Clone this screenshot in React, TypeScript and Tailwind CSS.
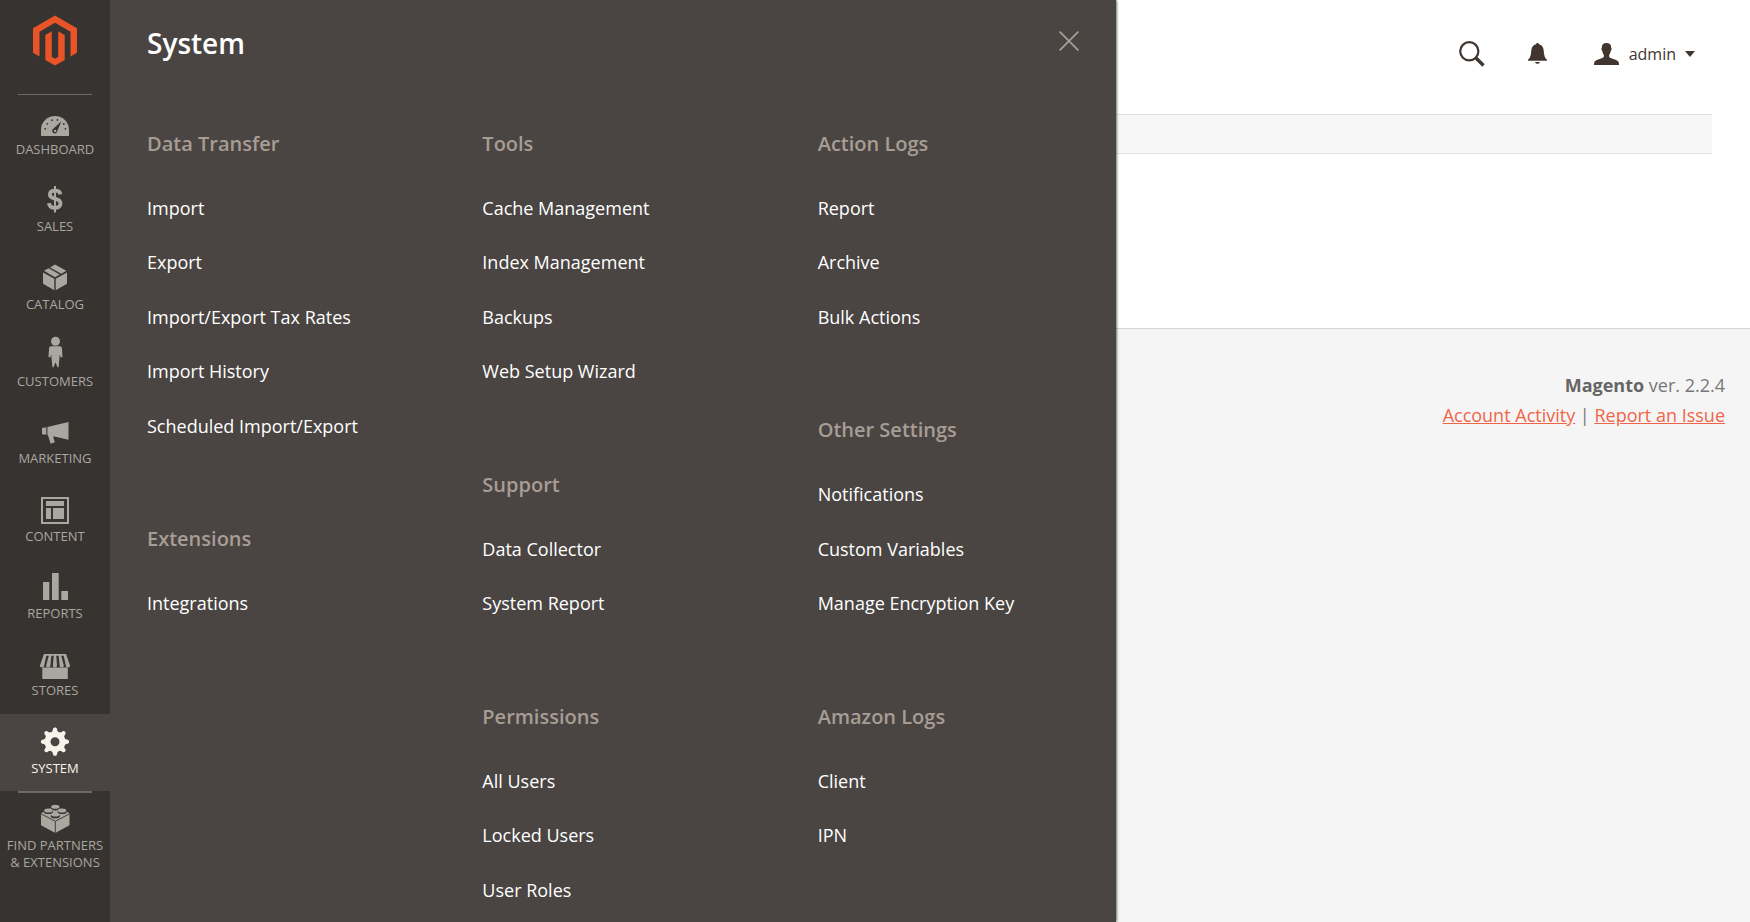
import type { ReactNode } from "react";

type NavItem = { label: ReactNode; icon: ReactNode; active?: boolean };
type Group = { title: string; links: string[] };

const navItems: NavItem[] = [
  {
    label: "Dashboard",
    icon: (
      <g transform="translate(4 13)">
        <path d="M0 20V14a14 14 0 0 1 28 0v6z" />
        <g className="fill-[#373330]">
          <circle cx="4.2" cy="12.8" r="0.9" />
          <circle cx="6.3" cy="7.8" r="0.9" />
          <circle cx="11" cy="4.2" r="0.9" />
          <circle cx="16.4" cy="3.9" r="0.9" />
          <circle cx="22.8" cy="8" r="0.9" />
          <circle cx="24.4" cy="12.8" r="0.9" />
          <path d="M20.400 5.200l-4 9.600a2.600 2.600 0 1 1-3.800-2.200z" />
        </g>
        <circle cx="14.200" cy="14.900" r="1.200" />
      </g>
    ),
  },
  {
    label: "Sales",
    icon: (
      <g transform="translate(10 6)" fill="none" stroke="currentColor">
        <path d="M13.400 8.400C13 5.800 11 4.600 8.100 4.600 5 4.600 2.900 6 2.900 8.500c0 5.800 10.600 2.600 10.600 9 0 2.800-2.300 4.400-5.500 4.400-3.400 0-5.700-1.600-6-4.800" strokeWidth="3.900" />
        <path d="M8 0v26.500" strokeWidth="2" />
      </g>
    ),
  },
  {
    label: "Catalog",
    icon: (
      <g transform="translate(6 6.500)">
        <path d="M12 0l11.300 6.200-5 3L7 2.900zM5.600 3.700l11.200 6.400L12 12.800.9 6.300zM0 7.900l11.300 6.400v11.400L0 19.300zM24 7.900l-11.300 6.400v11.400L24 19.300z" />
      </g>
    ),
  },
  {
    label: "Customers",
    icon: (
      <g transform="translate(11.500 1.700)">
        <circle cx="7" cy="4.500" r="4.500" />
        <path d="M2.600 9.600h8.800c1.200 0 1.900.8 2 2l.6 8.600-1.800.6-1-3-.3 4.200-.8 8.500H9L7 25.500l-2 5H3.900L3.100 22l-.3-4.200-1 3L0 20.200l.6-8.600c.1-1.200.8-2 2-2z" />
      </g>
    ),
  },
  {
    label: "Marketing",
    icon: (
      <g transform="translate(5 10)">
        <path d="M0 6l4.300-.8v7.600L0 12.200zM5.400 5L26.500 0v17.700L12.300 14.500l-1.200.3 1.800 5.500-4.300 1.400L6 13.300l-.6-.1z" />
      </g>
    ),
  },
  {
    label: "Content",
    icon: (
      <g transform="translate(4 7)">
        <path fillRule="evenodd" d="M0 0h28v27H0zM2 2v23h24V2zM5 4h18v5H5zM5 11h5v11H5zM12 11h11v11H12z" />
      </g>
    ),
  },
  {
    label: "Reports",
    icon: (
      <g transform="translate(6 6)">
        <path d="M0 9h6.300v18H0zM9 0h6.700v27H9zM18.300 18H25v9h-6.700z" />
      </g>
    ),
  },
  {
    label: "Stores",
    icon: (
      <g transform="translate(3 10)">
        <path d="M4 0h22l.6 1.800H3.400zM2.300 13.500h25.500V25H2.300z" />
        <path d="M3.600 1h2.800L4.200 11.500c0 2.600-4.700 2.600-4.200 0zM9 1h2.400l-1 10.500c0 2.600-4.600 2.600-4.200 0zM13.800 1h2.400l.8 10.500c0 2.600-4.200 2.600-4.100 0zM18.600 1H21l2.800 10.500c.4 2.600-4.200 2.600-4.200 0zM23.600 1h2.800L30 11.500c.5 2.600-4.200 2.600-4.200 0z" />
      </g>
    ),
  },
  {
    label: "System",
    active: true,
    icon: (
      <g transform="translate(18 19.700)">
        {[0, 45, 90, 135, 180, 225, 270, 315].map((a) => (
          <path key={a} transform={`rotate(${a})`} d="M-4.500-9c1.800-.6 2.200-1.800 2.500-3.600.2-2 3.800-2 4 0 .3 1.800.7 3 2.500 3.600z" />
        ))}
        <path fillRule="evenodd" d="M0-10.300a10.300 10.300 0 1 0 0 20.600 10.300 10.300 0 0 0 0-20.600zM0-4.500a4.500 4.500 0 1 1 0 9 4.500 4.500 0 0 1 0-9z" />
      </g>
    ),
  },
];

const partnersItem: NavItem = {
  label: (
    <>
      Find Partners
      <br />
      &amp; Extensions
    </>
  ),
  icon: (
    <g transform="translate(4 5.500)">
      <path d="M0 8.800L14.300 1.500 28.500 8.800v12L14.300 28.500 0 20.800z" />
      <g className="stroke-[#373330]" strokeWidth="0.900">
        <path d="M0 9.300l14.300 7.500 14.200-7.500M14.300 16.800v11.700" fill="none" />
      </g>
      <g className="fill-[#373330]">
        <ellipse cx="14.300" cy="3.600" rx="4.600" ry="2.300" />
        <ellipse cx="7.400" cy="7.300" rx="4.600" ry="2.300" />
        <ellipse cx="21.100" cy="7.300" rx="4.600" ry="2.300" />
        <ellipse cx="14.300" cy="11.500" rx="4.600" ry="2.300" />
      </g>
      <ellipse cx="14.300" cy="2.200" rx="4.200" ry="2" />
      <ellipse cx="7.400" cy="5.900" rx="4.200" ry="2" />
      <ellipse cx="21.100" cy="5.900" rx="4.200" ry="2" />
      <ellipse cx="14.300" cy="10.100" rx="4.200" ry="2" />
    </g>
  ),
};

const columns: Group[][] = [
  [
    { title: "Data Transfer", links: ["Import", "Export", "Import/Export Tax Rates", "Import History", "Scheduled Import/Export"] },
    { title: "Extensions", links: ["Integrations"] },
  ],
  [
    { title: "Tools", links: ["Cache Management", "Index Management", "Backups", "Web Setup Wizard"] },
    { title: "Support", links: ["Data Collector", "System Report"] },
    { title: "Permissions", links: ["All Users", "Locked Users", "User Roles"] },
  ],
  [
    { title: "Action Logs", links: ["Report", "Archive", "Bulk Actions"] },
    { title: "Other Settings", links: ["Notifications", "Custom Variables", "Manage Encryption Key"] },
    { title: "Amazon Logs", links: ["Client", "IPN"] },
  ],
];

function NavLink({ label, icon, active }: NavItem) {
  return (
    <a
      href="#"
      className={`flex flex-col items-center gap-[2px] pt-2 text-center text-[13px] leading-[17px] uppercase ${
        active ? "bg-[#4a4542] text-[#f7f3eb]" : "text-[#aaa6a0]"
      }`}
    >
      <svg viewBox="0 0 36 36" className="size-9 shrink-0" fill="currentColor" aria-hidden="true">
        {icon}
      </svg>
      <span>{label}</span>
    </a>
  );
}

function Sidebar() {
  return (
    <nav className="z-20 flex w-[110px] shrink-0 flex-col bg-[#373330]">
      <a href="#" aria-label="Magento" className="flex h-[94px] justify-center pt-[15px]">
        <svg viewBox="0 0 44 51" className="h-[51px] w-11" fill="#e85427" aria-hidden="true">
          <path d="M22 .500L44 13.200V37.700L37.500 41.500V16.700L22 7.800 6.500 16.700V41.500L0 37.700V13.200z" />
          <path d="M12.300 20L18.800 16.300V41.800L22 43.700l3.200-1.900V16.300L31.700 20v25L22 50.600 12.300 45z" />
        </svg>
      </a>
      <hr className="mx-[18px] border-[#736963]" />
      <div className="grid h-[696px] auto-rows-fr">
        {navItems.map((item, i) => (
          <NavLink key={i} {...item} />
        ))}
      </div>
      <hr className="mx-[18px] -mb-[2px] border-t-2 border-[#736963]" />
      <NavLink {...partnersItem} />
    </nav>
  );
}

function SystemMenu() {
  return (
    <section className="z-10 w-[1006px] shrink-0 bg-[#4a4542] shadow-[0_0_3px_#000]">
      <header className="flex h-[86px] items-center justify-between px-[37px]">
        <h2 className="text-[28px] leading-9 font-semibold text-white">System</h2>
        <button type="button" aria-label="Close" className="pb-1 text-[#a79d95]">
          <svg viewBox="0 0 20 20" className="size-5" fill="none" stroke="currentColor" strokeWidth="1.800" aria-hidden="true">
            <path d="M.6.6l18.800 18.800M19.400.6L.6 19.400" />
          </svg>
        </button>
      </header>
      <div className="grid grid-cols-3 pt-11">
        {columns.map((groups) => (
          <div key={groups[0].title} className="flex flex-col gap-[72px] pl-[37px]">
            {groups.map((group) => (
              <div key={group.title}>
                <h3 className="pb-[23px] text-[20px] leading-7 font-semibold text-[#a79d95]">{group.title}</h3>
                <ul className="text-[18px] leading-[1.36] text-white">
                  {group.links.map((link) => (
                    <li key={link}>
                      <a href="#" className="block py-[15px]">
                        {link}
                      </a>
                    </li>
                  ))}
                </ul>
              </div>
            ))}
          </div>
        ))}
      </div>
    </section>
  );
}

function Page() {
  return (
    <div className="flex min-w-0 flex-1 flex-col bg-[#f5f5f5]">
      <main className="h-[329px] border-b border-[#d6d6d6] bg-white">
        <header className="flex h-[114px] items-center justify-end pr-[55px] pb-[7px] text-[#41362f]">
          <button type="button" aria-label="Search">
            <svg viewBox="0 0 26 26" className="size-[26px]" fill="none" stroke="currentColor" aria-hidden="true">
              <circle cx="10.300" cy="10.300" r="9.100" strokeWidth="2.200" />
              <path d="M16.500 16.500l8 8" strokeWidth="3.400" />
            </svg>
          </button>
          <button type="button" aria-label="Notifications" className="ml-[43px]">
            <svg viewBox="0 0 19 21" className="h-[21px] w-[19px]" fill="currentColor" aria-hidden="true">
              <path d="M9.500 0c.9 0 1.300.6 1.400 1.300 3.200.8 4.500 3 4.800 6.200.4 4.900 1 7.500 3.300 9.200v1.100H0v-1.100c2.300-1.700 2.900-4.300 3.300-9.200.3-3.200 1.600-5.400 4.800-6.200C8.200.6 8.600 0 9.500 0zM7 18.900h5c-.4 1.200-1.300 1.800-2.500 1.800S7.400 20.100 7 18.900z" />
            </svg>
          </button>
          <button type="button" className="ml-[47px] flex items-center text-[16px] leading-6">
            <svg viewBox="0 0 25 22" className="mr-[10px] h-[22px] w-[25px]" fill="currentColor" aria-hidden="true">
              <path d="M12.500 0c3.200 0 4.800 1.800 4.700 4.900.6.300.5 2.200-.4 2.900-.3 1.900-.8 3-1.600 3.900v2.200c1 1.700 7.200 2.400 8.900 4.400.6.800.9 2 .9 3.700H0c0-1.700.3-2.900.9-3.700 1.700-2 7.900-2.700 8.900-4.400v-2.200c-.8-.9-1.300-2-1.600-3.900-.9-.7-1-2.600-.4-2.900C7.700 1.800 9.300 0 12.500 0z" />
            </svg>
            admin
            <svg viewBox="0 0 10 6" className="ml-[9px] h-[6px] w-[10px]" fill="currentColor" aria-hidden="true">
              <path d="M0 0h10L5 6z" />
            </svg>
          </button>
        </header>
        <div className="mr-[38px] h-10 border-y border-[#e3e3e3] bg-[#f7f7f7]" />
      </main>
      <footer className="pt-[41px] pr-[25px] text-right text-[18px] leading-[30px] text-[#777]">
        <p>
          <strong className="font-bold text-[#666]">Magento</strong> ver. 2.2.4
        </p>
        <p>
          <a href="#" className="text-[#ef6548] underline">Account Activity</a>
          {" | "}
          <a href="#" className="text-[#ef6548] underline">Report an Issue</a>
        </p>
      </footer>
    </div>
  );
}

export default function App() {
  return (
    <div className="flex min-h-screen font-['Open_Sans','Noto_Sans',sans-serif]">
      <Sidebar />
      <SystemMenu />
      <Page />
    </div>
  );
}
